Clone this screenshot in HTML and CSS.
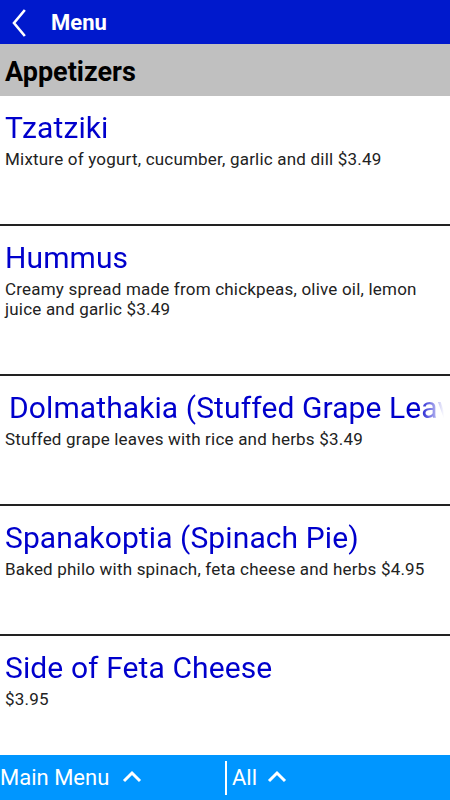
FILE: index.html
```html
<!DOCTYPE html>
<html>
<head>
<meta charset="utf-8">
<link rel="stylesheet" href="styles.css">
</head>
<body>
<div class="app">
  <header class="topbar">
    <svg class="back" width="16" height="28" viewBox="0 0 16 28"><polyline points="13,2 3,14 13,26" fill="none" stroke="#fff" stroke-width="2.6" stroke-linecap="square"/></svg>
    <span class="topbar-title">Menu</span>
  </header>
  <div class="section">Appetizers</div>
  <main class="list">
    <div class="item">
      <div class="item-title">Tzatziki</div>
      <div class="item-desc">Mixture of yogurt, cucumber, garlic and dill $3.49</div>
    </div>
    <div class="item">
      <div class="item-title">Hummus</div>
      <div class="item-desc">Creamy spread made from chickpeas, olive oil, lemon juice and garlic $3.49</div>
    </div>
    <div class="item">
      <div class="item-title item-title--offset">Dolmathakia (Stuffed Grape Leaves)</div>
      <div class="item-desc">Stuffed grape leaves with rice and herbs $3.49</div>
    </div>
    <div class="item">
      <div class="item-title">Spanakoptia (Spinach Pie)</div>
      <div class="item-desc">Baked philo with spinach, feta cheese and herbs $4.95</div>
    </div>
    <div class="item">
      <div class="item-title">Side of Feta Cheese</div>
      <div class="item-desc">$3.95</div>
    </div>
  </main>
  <footer class="bottombar">
    <div class="tab tab-main">
      <span>Main Menu</span>
      <svg class="up" width="20" height="13" viewBox="0 0 20 13"><polyline points="2,11 10,3 18,11" fill="none" stroke="#fff" stroke-width="3"/></svg>
    </div>
    <div class="divider"></div>
    <div class="tab tab-all">
      <span>All</span>
      <svg class="up" width="20" height="13" viewBox="0 0 20 13"><polyline points="2,11 10,3 18,11" fill="none" stroke="#fff" stroke-width="3"/></svg>
    </div>
  </footer>
</div>
</body>
</html>
```
FILE: styles.css
```css
* { box-sizing: border-box; }
html, body { margin: 0; padding: 0; }
body {
  font-family: Roboto, "Noto Sans", sans-serif;
  background: #fff;
}
.app {
  height: 800px;
  display: flex;
  flex-direction: column;
  overflow: hidden;
}
.topbar {
  height: 44px;
  flex: none;
  background: #0019cc;
  display: flex;
  align-items: center;
  padding-left: 11px;
}
.back { display: block; margin-top: 1px; }
.topbar-title {
  color: #fff;
  font-weight: bold;
  font-size: 22px;
  margin-left: 24px;
  margin-top: 1px;
}
.section {
  height: 52px;
  flex: none;
  background: #c0c0c0;
  font-weight: bold;
  font-size: 27px;
  color: #000;
  padding-left: 5px;
  line-height: 56px;
}
.list {
  flex: 1;
  overflow: hidden;
}
.item {
  padding: 15px 6px 55px 5px;
  border-bottom: 2px solid #222;
}
.item-title {
  font-size: 30px;
  letter-spacing: 0.1px;
  line-height: 34px;
  color: #0000cc;
  white-space: nowrap;
  overflow: hidden;
  -webkit-mask-image: linear-gradient(to right, #000 calc(100% - 26px), transparent);
  mask-image: linear-gradient(to right, #000 calc(100% - 26px), transparent);
}
.item-title--offset { text-indent: 4px; }
.item-desc {
  margin-top: 4px;
  font-size: 17px;
  letter-spacing: 0.2px;
  line-height: 20px;
  color: #222;
}
.bottombar {
  height: 45px;
  flex: none;
  background: #0096ff;
  display: flex;
  align-items: center;
  color: #fff;
  font-size: 22px;
}
.tab {
  display: flex;
  align-items: center;
}
.tab-main { width: 225px; padding-left: 0; }
.tab-main .up { margin-left: 13px; }
.divider {
  width: 2px;
  height: 34px;
  background: #fff;
  margin-top: 1px;
}
.tab-all { padding-left: 5px; }
.tab-all .up { margin-left: 10px; }
.up { display: block; margin-top: -2px; }
```
